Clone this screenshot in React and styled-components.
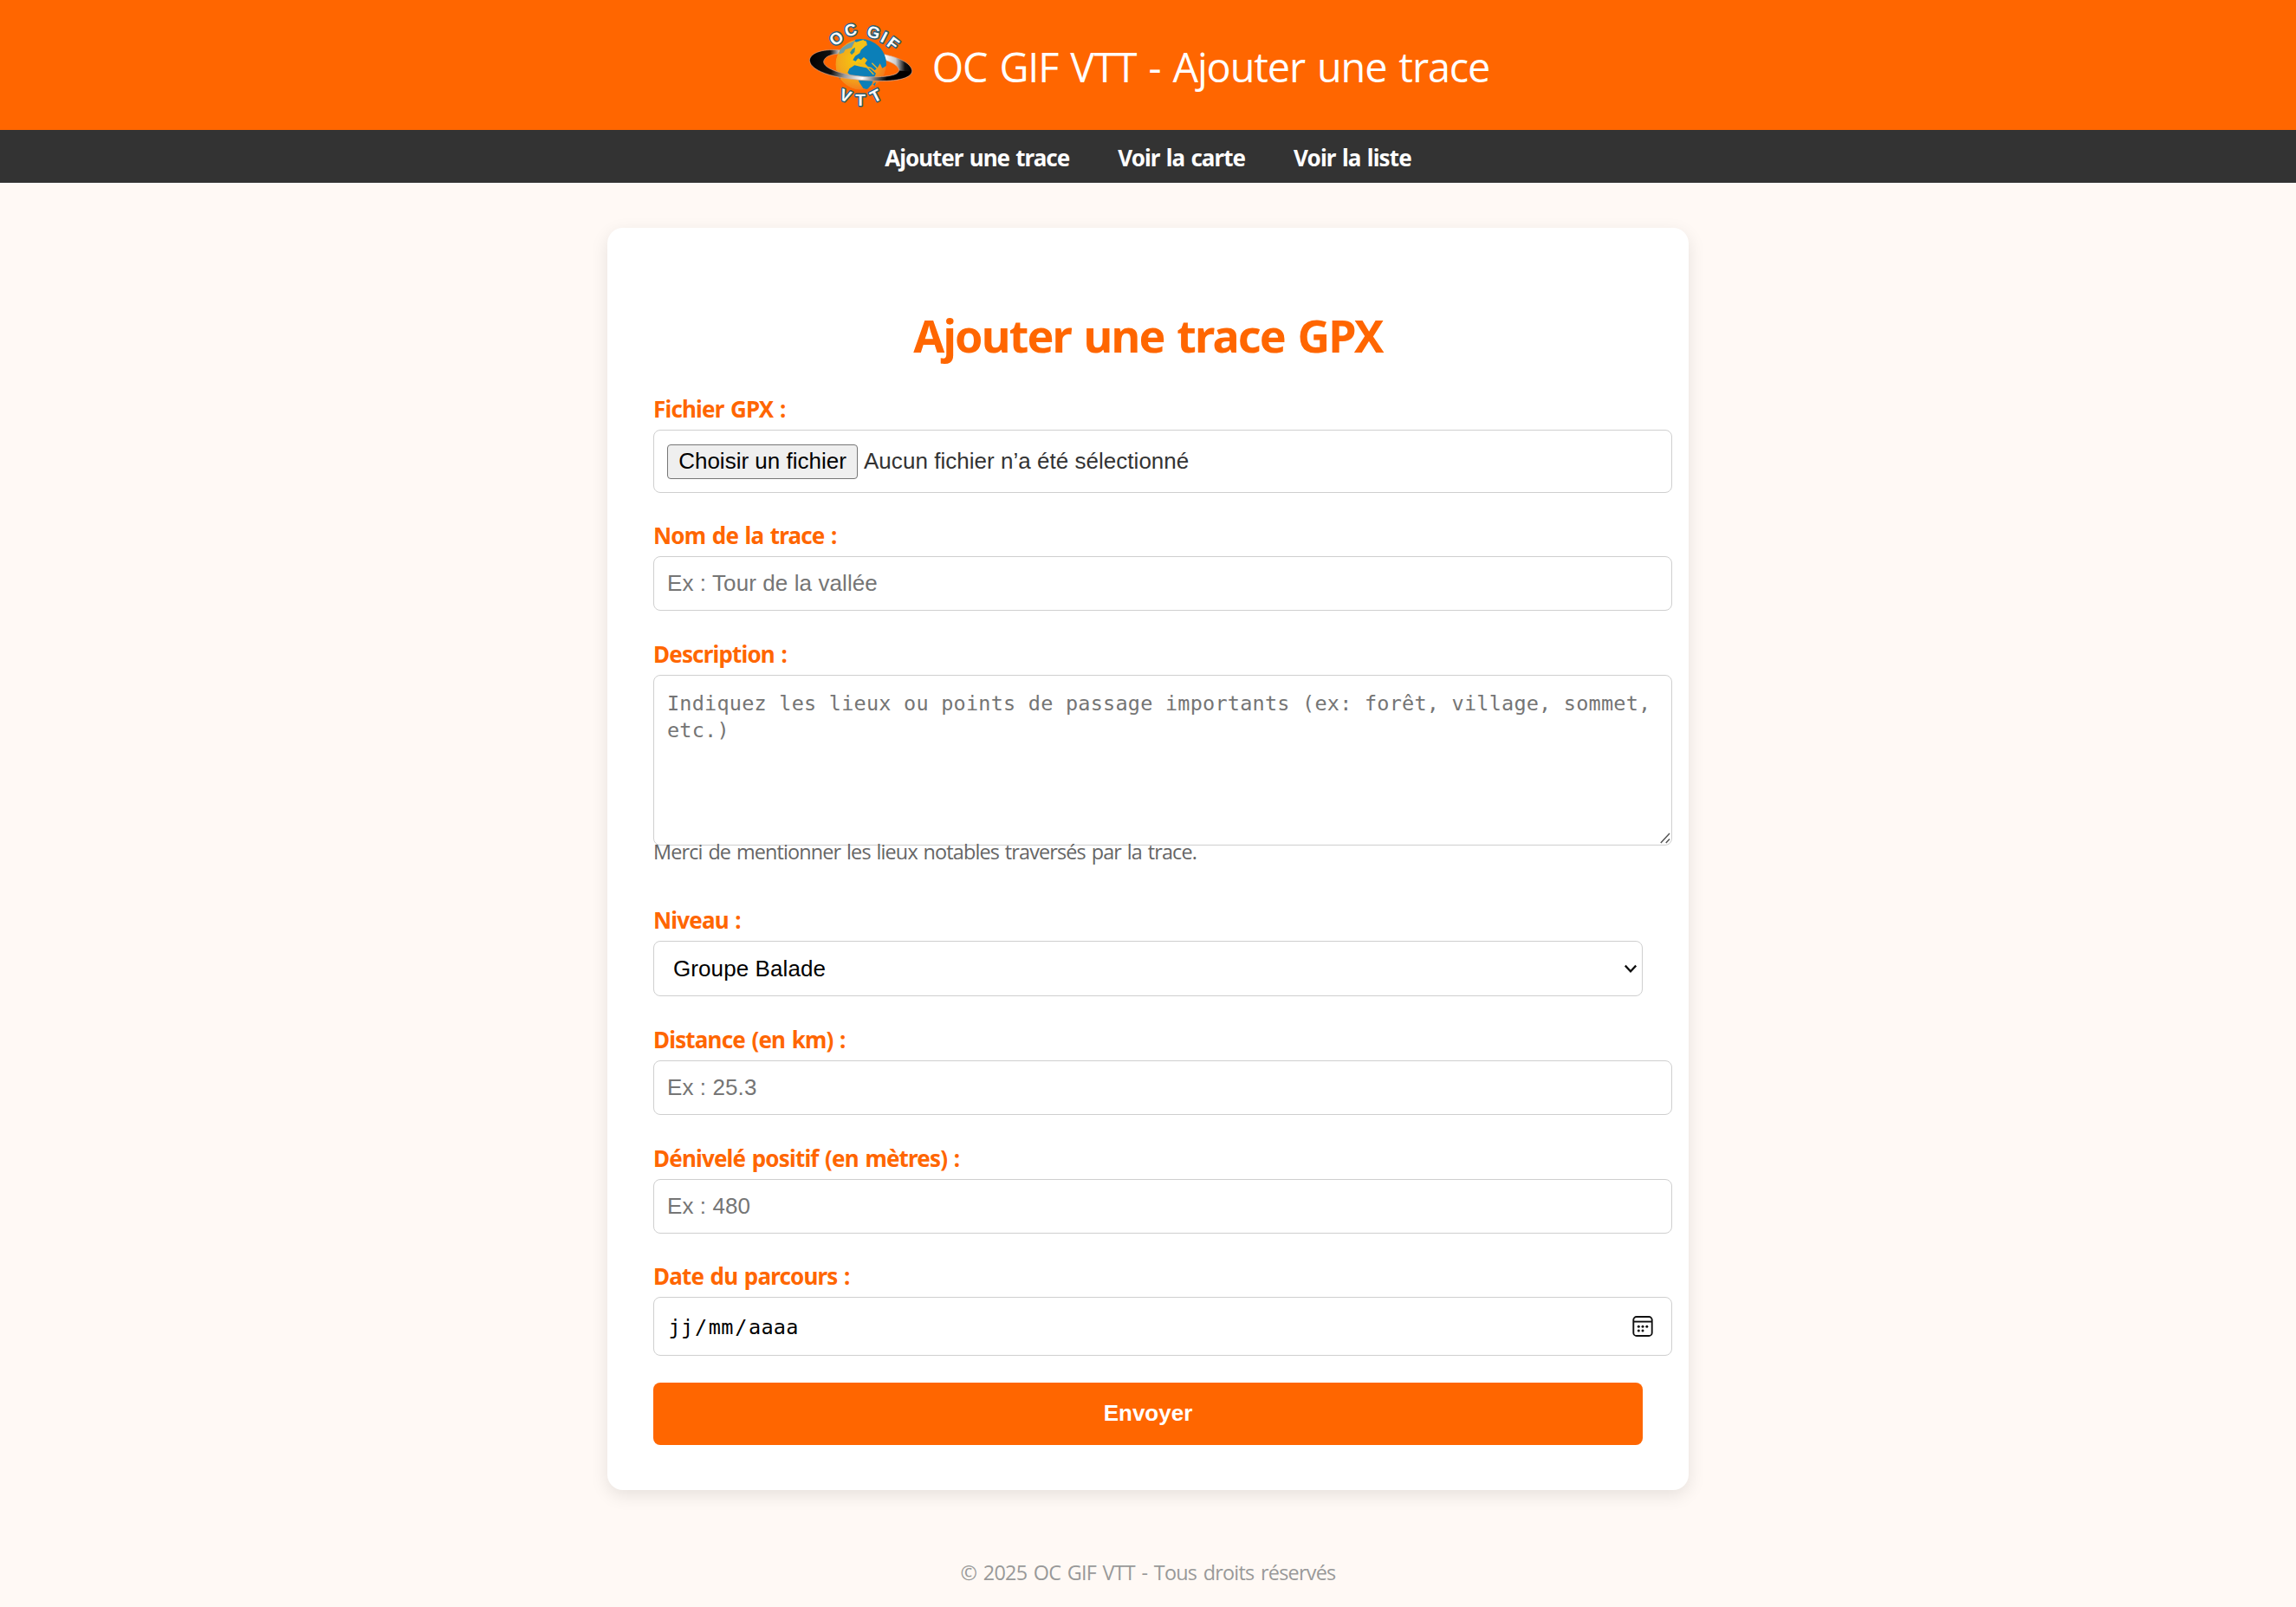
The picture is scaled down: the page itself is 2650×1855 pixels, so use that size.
import React from "react";
import styled, { createGlobalStyle } from "styled-components";

const orange = "#ff6600";
const humanist = '"Open Sans", "Noto Sans", sans-serif';
const humanistBold = '"Noto Sans", "Open Sans", sans-serif';
const grotesque = '"Liberation Sans", Arial, sans-serif';
const mono = '"DejaVu Sans Mono", "Liberation Mono", monospace';

const GlobalStyle = createGlobalStyle`
  *, *::before, *::after { box-sizing: border-box; }
  body {
    margin: 0;
    min-height: 1855px;
    background: #fff9f5;
    color: #333;
    font-family: ${humanist};
  }
`;

const Header = styled.header`
  display: flex;
  align-items: center;
  justify-content: center;
  gap: 15px;
  height: 150px;
  background: ${orange};
  color: #fff;
`;

const LogoSvg = styled.svg`
  display: block;
  width: 130px;
  height: 125px;
  margin-top: -5px;
`;

const SiteTitle = styled.div`
  padding-top: 3px;
  font-size: 46.8px;
  line-height: 64px;
  letter-spacing: -1.12px;
  word-spacing: 3px;
`;

const Nav = styled.nav`
  display: flex;
  align-items: center;
  justify-content: center;
  gap: 56px;
  height: 61px;
  padding-top: 2px;
  background: #333;
`;

const NavLink = styled.a`
  color: #fff;
  font: bold 26px/34px ${humanistBold};
  letter-spacing: ${(p) => p.$tracking}px;
  word-spacing: 1.5px;
  text-decoration: none;
`;

const Card = styled.main`
  width: 1248px;
  margin: 52px auto 0;
  padding: 88px 53px 52px;
  border-radius: 18px;
  background: #fff;
  box-shadow: 0 6px 20px rgba(0, 0, 0, 0.1);
`;

const Title = styled.h2`
  margin: 0 0 33px;
  color: ${orange};
  font: bold 52px/71px ${humanistBold};
  letter-spacing: -1.86px;
  word-spacing: 3px;
  text-align: center;
`;

const Field = styled.div`
  display: flex;
  flex-direction: column;
  margin-bottom: ${(p) => p.$gap ?? 33}px;
`;

const Label = styled.label`
  margin-bottom: 7px;
  color: ${orange};
  font: bold 26px/34px ${humanistBold};
  letter-spacing: -0.83px;
  word-spacing: 1.6px;
`;

const Frame = styled.div`
  display: flex;
  align-items: center;
  width: ${(p) => p.$width ?? 1176}px;
  height: ${(p) => p.$height}px;
  border: 1px solid #cfcfcf;
  border-radius: 8px;
  background: #fff;
`;

const TextInput = styled.input`
  width: 1176px;
  height: 63px;
  padding: 0 15px;
  border: 1px solid #cfcfcf;
  border-radius: 8px;
  outline: none;
  background: #fff;
  color: #000;
  font: 26px ${grotesque};
  letter-spacing: 0.09px;
  &::placeholder { color: #757575; opacity: 1; }
`;

const FileFrame = styled(Frame)`
  padding-left: 15px;
  font: 26px/30px ${grotesque};
`;

const FileButton = styled.button`
  width: 220px;
  height: 40px;
  margin-right: 7px;
  padding: 0 0 1px;
  border: 1px solid #767676;
  border-radius: 4px;
  background: #efefef;
  color: #000;
  font: 26px/30px ${grotesque};
`;

const FileName = styled.span`
  padding-bottom: 1px;
  letter-spacing: 0.03px;
`;

const AreaWrap = styled.div`
  position: relative;
  width: 1176px;
  height: 197px;
`;

const Area = styled.textarea`
  display: block;
  width: 100%;
  height: 100%;
  padding: 17px 12px 14px 15px;
  border: 1px solid #cfcfcf;
  border-radius: 8px;
  outline: none;
  resize: none;
  overflow: hidden;
  background: #fff;
  font: 23.5px/31px ${mono};
  letter-spacing: 0.225px;
  &::placeholder { color: #757575; opacity: 1; }
`;

const Grip = styled.svg`
  position: absolute;
  right: 2px;
  bottom: 2px;
  width: 12px;
  height: 13px;
`;

const Hint = styled.small`
  position: relative;
  margin-top: -9px;
  color: #666;
  font-size: 23.4px;
  line-height: 32px;
  letter-spacing: -0.84px;
  word-spacing: 1.5px;
`;

const SelectFrame = styled(Frame)`
  padding-right: 5px;
`;

const Select = styled.select`
  flex: 1;
  height: 100%;
  padding: 0 0 0 22px;
  border: 0;
  outline: none;
  appearance: none;
  background: transparent;
  color: #000;
  font: 26px ${grotesque};
  letter-spacing: 0.09px;
`;

const DateFrame = styled(Frame)`
  justify-content: space-between;
  padding: 0 20px 0 15px;
`;

const DateText = styled.div`
  padding-top: 2px;
  color: #000;
  font: 23.5px/30px ${mono};
  letter-spacing: 0.2px;
`;

const DatePart = styled.span`
  padding: 0 1.6px;
`;

const Submit = styled.button`
  display: block;
  width: 100%;
  height: 72px;
  padding: 0 0 2px;
  border: 0;
  border-radius: 8px;
  background: ${orange};
  color: #fff;
  font: bold 26px/30px ${grotesque};
`;

const Footer = styled.footer`
  margin-top: 79px;
  color: #999;
  font-size: 23.4px;
  line-height: 32px;
  letter-spacing: -0.76px;
  word-spacing: 2.2px;
  text-align: center;
`;

const logoLetters = [
  ["O", 133, 103, -37],
  ["C", 182, 74, -15],
  ["G", 262, 82, 15],
  ["I", 298, 99, 27],
  ["F", 329, 121, 37],
  ["V", 164, 301, 21],
  ["T", 216, 317, 0],
  ["T", 269, 302, -27],
];

function Logo() {
  return (
    <LogoSvg viewBox="30 0 390 375" role="img" aria-label="OC GIF VTT">
      <defs>
        <radialGradient id="sea" cx="0.42" cy="0.42" r="0.6">
          <stop offset="0" stopColor="#f6c90e" />
          <stop offset="0.6" stopColor="#f3a81c" />
          <stop offset="1" stopColor="#f47a1c" />
        </radialGradient>
        <linearGradient id="ring" x1="0" x2="1" y1="0" y2="0.1">
          <stop offset="0" stopColor="#000" />
          <stop offset="0.28" stopColor="#111" />
          <stop offset="0.42" stopColor="#999" />
          <stop offset="0.6" stopColor="#fff" />
          <stop offset="0.72" stopColor="#777" />
          <stop offset="0.84" stopColor="#000" />
          <stop offset="1" stopColor="#000" />
        </linearGradient>
        <linearGradient id="ringBack" x1="0" x2="1">
          <stop offset="0" stopColor="#000" />
          <stop offset="0.2" stopColor="#111" />
          <stop offset="0.3" stopColor="#ddd" />
          <stop offset="0.72" stopColor="#fff" />
          <stop offset="0.84" stopColor="#ccc" />
          <stop offset="0.93" stopColor="#111" />
          <stop offset="1" stopColor="#000" />
        </linearGradient>
        <clipPath id="globe"><circle cx="218" cy="193" r="88" /></clipPath>
        <clipPath id="front"><path d="M20 190 L420 220 V375 H20 Z" /></clipPath>
        <path
          id="band"
          fillRule="evenodd"
          d="M40 178C44 150 92 138 150 144C250 142 388 166 395 214C396 244 330 254 250 249C150 246 42 222 40 178Z
             M89 183C87 208 160 233 245 236C310 238 350 230 350 212C345 185 270 163 180 157C125 153 93 162 89 183Z"
        />
      </defs>
      <use href="#band" fill="url(#ringBack)" stroke="#d9a184" strokeWidth="2" />
      <g clipPath="url(#globe)">
        <circle cx="218" cy="193" r="88" fill="url(#sea)" />
        <path fill="#6f9fa5" d="M145 140L172 122L198 110L186 134L164 142L158 152L142 158Z" />
        <path fill="#0b7fb8" d="M205 98C262 98 312 140 310 196L292 206L284 190L276 204L266 214L254 204L242 200L232 190L240 178L228 168L218 178L208 172L200 182L190 178L198 164L214 154L220 138L240 126L236 112L216 112L206 120L196 112Z" />
        <path fill="#f2c31a" d="M196 118L226 108L238 118L228 134L214 146L196 150L186 142Z" />
        <path fill="#0b7fb8" d="M178 208L196 196L214 200L232 204L252 208L270 224L262 242L256 262L240 280L226 276L212 254L206 238L184 234L172 222Z" />
        <path fill="#2c8f9a" d="M188 140L198 134L196 150L186 160L180 152Z" />
        <path fill="none" stroke="#e6b52a" strokeWidth="4" d="M238 202L262 228M206 188L222 194M256 188L274 206" />
        <path fill="#0b7fb8" d="M134 226L146 238L148 252L138 244ZM260 262L270 254L266 268Z" />
      </g>
      <g clipPath="url(#front)">
        <use href="#band" fill="url(#ring)" stroke="#d9a184" strokeWidth="2" />
      </g>
      {logoLetters.map(([letter, x, y, angle], i) => (
        <text
          key={i}
          transform={`translate(${x} ${y}) rotate(${angle})`}
          y="19.5"
          textAnchor="middle"
          fontFamily="Liberation Sans, Arial, sans-serif"
          fontSize="57"
          fontWeight="bold"
          fill="#fff"
          stroke="#2c6078"
          strokeWidth="9"
          strokeLinejoin="round"
          paintOrder="stroke"
        >
          {letter}
        </text>
      ))}
    </LogoSvg>
  );
}

function Chevron() {
  return (
    <svg width="16" height="12" viewBox="0 0 16 12">
      <path d="M1.8 2.6L8 9.2L14.2 2.6" fill="none" stroke="#111" strokeWidth="2.3" />
    </svg>
  );
}

function Calendar() {
  return (
    <svg width="26" height="26" viewBox="0 0 26 26">
      <rect x="2.3" y="2" width="21.4" height="22" rx="3.6" fill="none" stroke="#111" strokeWidth="1.9" />
      <path d="M2.3 7.6H23.7" stroke="#111" strokeWidth="1.9" />
      <g fill="#111">
        <circle cx="8.3" cy="13.2" r="1.5" />
        <circle cx="13" cy="13.2" r="1.5" />
        <circle cx="17.8" cy="13.2" r="1.5" />
        <circle cx="8.3" cy="18" r="1.5" />
        <circle cx="13" cy="18" r="1.5" />
      </g>
    </svg>
  );
}

export default function App() {
  return (
    <>
      <GlobalStyle />
      <Header>
        <Logo />
        <SiteTitle>OC GIF VTT - Ajouter une trace</SiteTitle>
      </Header>
      <Nav>
        <NavLink $tracking={-1}>Ajouter une trace</NavLink>
        <NavLink $tracking={-0.96}>Voir la carte</NavLink>
        <NavLink $tracking={-0.88}>Voir la liste</NavLink>
      </Nav>
      <Card>
        <Title>Ajouter une trace GPX</Title>
        <Field $gap={32}>
          <Label>Fichier GPX :</Label>
          <FileFrame $height={73}>
            <FileButton type="button">Choisir un fichier</FileButton>
            <FileName>Aucun fichier n’a été sélectionné</FileName>
          </FileFrame>
        </Field>
        <Field>
          <Label>Nom de la trace :</Label>
          <TextInput placeholder="Ex : Tour de la vallée" />
        </Field>
        <Field $gap={46}>
          <Label>Description :</Label>
          <AreaWrap>
            <Area placeholder="Indiquez les lieux ou points de passage importants (ex: forêt, village, sommet, etc.)" />
            <Grip viewBox="0 0 12 13">
              <path d="M0.8 12L11 1M6.8 12L11 7.4" stroke="#555" strokeWidth="1.5" />
            </Grip>
          </AreaWrap>
          <Hint>Merci de mentionner les lieux notables traversés par la trace.</Hint>
        </Field>
        <Field>
          <Label>Niveau :</Label>
          <SelectFrame $width={1142} $height={64}>
            <Select><option>Groupe Balade</option></Select>
            <Chevron />
          </SelectFrame>
        </Field>
        <Field>
          <Label>Distance (en km) :</Label>
          <TextInput placeholder="Ex : 25.3" />
        </Field>
        <Field $gap={32}>
          <Label>Dénivelé positif (en mètres) :</Label>
          <TextInput placeholder="Ex : 480" />
        </Field>
        <Field $gap={31}>
          <Label>Date du parcours :</Label>
          <DateFrame $height={68}>
            <DateText>
              <DatePart>jj</DatePart>/<DatePart>mm</DatePart>/<DatePart>aaaa</DatePart>
            </DateText>
            <Calendar />
          </DateFrame>
        </Field>
        <Submit type="button">Envoyer</Submit>
      </Card>
      <Footer>© 2025 OC GIF VTT - Tous droits réservés</Footer>
    </>
  );
}
